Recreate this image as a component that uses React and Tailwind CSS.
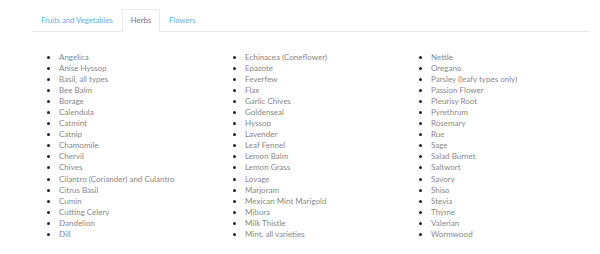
import React from "react";

const cols = [
  ["Angelica","Anise Hyssop","Basil, all types","Bee Balm","Borage","Calendula","Catmint","Catnip","Chamomile","Chervil","Chives","Cilantro (Coriander) and Culantro","Citrus Basil","Cumin","Cutting Celery","Dandelion","Dill"],
  ["Echinacea (Coneflower)","Epazote","Feverfew","Flax","Garlic Chives","Goldenseal","Hyssop","Lavender","Leaf Fennel","Lemon Balm","Lemon Grass","Lovage","Marjoram","Mexican Mint Marigold","Mibura","Milk Thistle","Mint, all varieties"],
  ["Nettle","Oregano","Parsley (leafy types only)","Passion Flower","Pleurisy Root","Pyrethrum","Rosemary","Rue","Sage","Salad Burnet","Saltwort","Savory","Shiso","Stevia","Thyme","Valerian","Wormwood"],
];

export default function App() {
  return (
    <div className="w-[600px] h-[254px] bg-white" style={{ fontFamily: "Lato, 'Open Sans', sans-serif" }}>
      <div className="pt-[9px] pl-[32px] pr-[10px]">
        <div className="flex border-b border-[#e8e8e8] text-[7.7px] leading-[12px]">
          <div className="px-[8px] py-[4px] text-[#5bb2e4] border border-transparent">Fruits and Vegetables</div>
          <div className="px-[8px] py-[4px] text-[#777] border border-[#e8e8e8] border-b-white bg-white rounded-t-[2px] -mb-px">Herbs</div>
          <div className="px-[8px] py-[4px] text-[#5bb2e4] border border-transparent">Flowers</div>
        </div>
        <div className="grid grid-cols-3 mt-[19.5px]">
          {cols.map((c, i) => (
            <ul key={i} className="list-disc pl-[27px] text-[8px] leading-[11.1px] text-[#222]">
              {c.map((t) => (
                <li key={t}><span className="text-[#888]">{t}</span></li>
              ))}
            </ul>
          ))}
        </div>
      </div>
    </div>
  );
}
